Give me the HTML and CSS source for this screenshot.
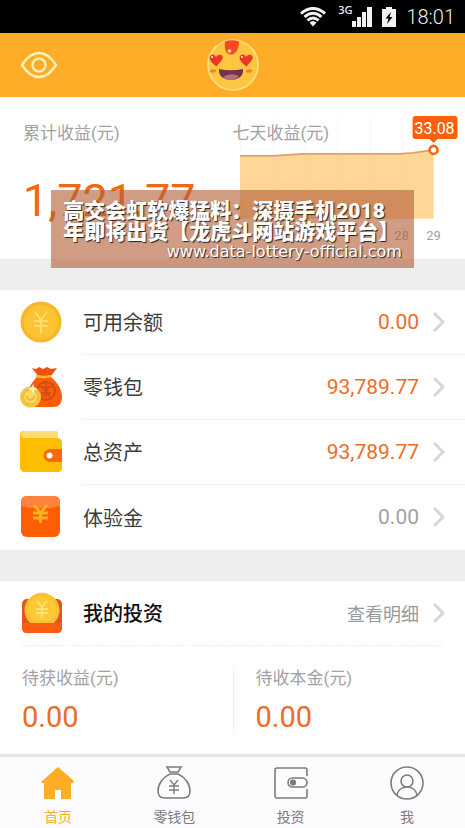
FILE: index.html
```html
<!DOCTYPE html>
<html lang="zh-CN">
<head>
    <meta charset="UTF-8">
    <meta name="viewport" content="width=device-width, initial-scale=1.0">
    <title>首页</title>
    <link rel="stylesheet" href="styles.css">
</head>
<body>
    <div class="status-bar">
        <svg class="wifi" width="26" height="20" viewBox="0 0 26 20">
            <g fill="none" stroke="#f2f2f2" stroke-width="3">
                <path d="M1 6.500Q13 -3.500 25 6.500"/>
                <path d="M4.500 10Q13 2.500 21.500 10"/>
                <path d="M7.500 13.500Q13 8.500 18.500 13.500"/>
            </g>
            <path d="M9.500 15.500Q13 12.500 16.500 15.500L13 19.500z" fill="#f2f2f2"/>
        </svg>
        <span class="network">3G</span>
        <svg class="signal" width="20" height="20" viewBox="0 0 20 20" fill="#f2f2f2">
            <path d="M0 14h4v6H0zM5 10h4v10H5zM10 5h4v15h-4zM15 0h5v20h-5z"/>
        </svg>
        <svg class="battery" width="14" height="20" viewBox="0 0 14 20">
            <path d="M4 0h6v2h4v18H0V2h4z" fill="#f2f2f2"/>
            <path d="M9 5L3.500 11.500h3L5 17l5.500-7h-3z" fill="#000"/>
        </svg>
        <span class="clock">18:01</span>
    </div>

    <header class="header">
        <button class="eye" type="button" aria-label="隐藏金额">
            <svg width="38" height="28" viewBox="0 0 38 28" fill="none" stroke="#fff0b8" stroke-width="2.400">
                <path d="M2 14C7 6 12 2 19 2s12 4 17 12c-5 8-10 12-17 12S7 22 2 14z"/>
                <circle cx="19" cy="14" r="6.500"/>
            </svg>
        </button>
        <svg class="avatar" width="52" height="52" viewBox="0 0 52 52">
            <circle cx="26" cy="26" r="25" fill="#fdc63f" stroke="#ffdf86" stroke-width="1.600"/>
            <path d="M18 2.500q7-2.500 14 0c0 7-3 13-8 13s-7-5-6-13z" fill="#f94a20"/>
            <circle cx="22.500" cy="12" r="1.800" fill="#ffe5d2"/>
            <g fill="#ee3527">
                <path d="M9.500 27.500C4 23 1.500 20 3 17c1.500-2.500 5-2 6 1 2-3 5.500-3 6.500-.500 1 3-2 5-6 10z"/>
                <path d="M39.500 27.500c-5.500-4.500-8-7.500-6.500-10.500 1.500-2.500 5-2 6 1 2-3 5.500-3 6.500-.500 1 3-2 5-6 10z"/>
            </g>
            <circle cx="5" cy="18" r="1" fill="#fff"/>
            <circle cx="35" cy="18" r="1" fill="#fff"/>
            <path d="M3 33l2-2v2l2-2v2l2-2M39 33l2-2v2l2-2v2l2-2" fill="none" stroke="#f27a32" stroke-width="1.300"/>
            <path d="M12 30q12 2.500 24 0c1 7-5 11-12 11s-13-4-12-11z" fill="#743448"/>
            <path d="M16 38q8-5 16-1-3 4-8 4t-8-3z" fill="#b17080"/>
        </svg>
    </header>

    <main>
        <section class="summary">
            <div class="total">
                <h2 class="label">累计收益(元)</h2>
                <p class="total-value">1,721.77</p>
            </div>
            <div class="week">
                <h2 class="label">七天收益(元)</h2>
                <svg class="chart" viewBox="0 0 233 162">
                    <path d="M7.500 20v35M40.500 20v35M72.500 20v35M104.500 20v35M137.500 20v35M169.500 20v35M201.500 20v35" stroke="#f6f6f6"/>
                    <path d="M7 59h33l30-2h96l14-1 21-3v69H7z" fill="#ffd695"/>
                    <path d="M40.500 59v63M72.500 57v65M104.500 57v65M137.500 57v65M169.500 57v65" stroke="#fdd392"/>
                    <path d="M7 59h33l30-2h96l14-1 21-3" fill="none" stroke="#e2a06a" stroke-width="1.600"/>
                    <path d="M183 19h39q3 0 3 3v17q0 3-3 3h-17l-4 4-4-4h-14q-3 0-3-3V22q0-3 3-3z" fill="#fc600c"/>
                    <circle cx="201" cy="53" r="4" fill="#fff" stroke="#f56610" stroke-width="2.600"/>
                    <text class="tip" x="202" y="37">33.08</text>
                    <text class="day" x="169" y="143">28</text>
                    <text class="day" x="201" y="143">29</text>
                </svg>
            </div>
            <div class="banner">
                <p class="banner-title">高交会虹软爆猛料：深摄手机2018<br>年即将出货【龙虎斗网站游戏平台】</p>
                <p class="banner-url">www.data-lottery-official.com</p>
            </div>
        </section>

        <nav class="accounts">
            <a class="row" href="#balance">
                <svg class="row-icon" width="42" height="42" viewBox="0 0 42 42">
                    <circle cx="21" cy="21" r="20.500" fill="#f8b62b"/>
                    <circle cx="21" cy="21" r="17" fill="#fcc433"/>
                    <path d="M15 11l6 8 6-8M21 19v13M14 20h14M14 25h14" fill="none" stroke="#ffde6c" stroke-width="2"/>
                </svg>
                <span class="row-body">
                    <span class="name">可用余额</span>
                    <span class="amount">0.00</span>
                    <svg class="arrow" width="12" height="20" viewBox="0 0 12 20"><path d="M1 1l9 9-9 9"/></svg>
                </span>
            </a>
            <a class="row" href="#wallet">
                <svg class="row-icon" width="42" height="42" viewBox="0 0 42 42">
                    <path d="M18 10h12c7 6 12 13 12 21 0 7-4 10-9 10H16C9 41 7 37 7 31c0-8 5-15 11-21z" fill="#fb5d08"/>
                    <path d="M12 2l4 1 3-2 4 2 4-2 4 2 6-1-6 8H18z" fill="#ed5012"/>
                    <path d="M16 10q8 2 15 0" fill="none" stroke="#ffbc27" stroke-width="2.500"/>
                    <circle cx="26" cy="25" r="9" fill="none" stroke="#d04a18" stroke-width="2"/>
                    <path d="M20 21h12M26 17v15M21 27h10M22 31l8-11M30 31l-8-11" fill="none" stroke="#d04a18" stroke-width="1.300"/>
                    <circle cx="10.500" cy="31" r="10.500" fill="#f6c444"/>
                    <circle cx="10.500" cy="31" r="7" fill="#ffd95e" stroke="#e9b83c"/>
                    <path d="M6 30q4 8 9 0" fill="none" stroke="#e8b438" stroke-width="1.500"/>
                    <path d="M13 18l1.500 3.500L18 23l-3.500 1.500L13 28l-1.500-3.500L8 23l3.500-1.500z" fill="#fff3b0"/>
                </svg>
                <span class="row-body">
                    <span class="name">零钱包</span>
                    <span class="amount">93,789.77</span>
                    <svg class="arrow" width="12" height="20" viewBox="0 0 12 20"><path d="M1 1l9 9-9 9"/></svg>
                </span>
            </a>
            <a class="row" href="#assets">
                <svg class="row-icon" width="42" height="42" viewBox="0 0 42 42">
                    <path d="M4 0h31q3 0 3 3v4q4 1 4 5v25q0 4-4 4H5q-5 0-5-5V4q0-4 4-4z" fill="#fdbd00"/>
                    <path d="M4 0h31q3 0 3 3v4H6Q1 7 1 3q1-3 3-3z" fill="#ffdc76"/>
                    <path d="M42 18H30a6.500 6.500 0 000 13h12z" fill="#fa6813"/>
                    <circle cx="29.500" cy="24.500" r="3" fill="#fff"/>
                </svg>
                <span class="row-body">
                    <span class="name">总资产</span>
                    <span class="amount">93,789.77</span>
                    <svg class="arrow" width="12" height="20" viewBox="0 0 12 20"><path d="M1 1l9 9-9 9"/></svg>
                </span>
            </a>
            <a class="row" href="#bonus">
                <svg class="row-icon" width="42" height="42" viewBox="0 0 42 42">
                    <rect x="1" y="0" width="39" height="41" rx="6" fill="#ff5d02"/>
                    <path d="M7 0h27q6 0 6 6v4Q20 15 1 10V6q0-6 6-6z" fill="#ff833c"/>
                    <path d="M14 9l6.500 8L27 9M20.500 17v10M13 17h15M13 22h15" fill="none" stroke="#ffb01e" stroke-width="2.800"/>
                </svg>
                <span class="row-body">
                    <span class="name">体验金</span>
                    <span class="amount empty">0.00</span>
                    <svg class="arrow" width="12" height="20" viewBox="0 0 12 20"><path d="M1 1l9 9-9 9"/></svg>
                </span>
            </a>
        </nav>

        <section class="invest">
            <a class="row" href="#invest">
                <svg class="row-icon" width="42" height="42" viewBox="0 0 42 42">
                    <rect x="2" y="7" width="40" height="34" rx="5" fill="#e35420"/>
                    <path d="M2 31h40v5q0 5-5 5H7q-5 0-5-5z" fill="#fc5b12"/>
                    <path d="M10 31a17.500 17.500 0 1124 0z" fill="#fdc02f"/>
                    <path d="M12.500 29a14 14 0 1119 0z" fill="#ffc936"/>
                    <path d="M17 9l5 6 5-6M22 15v10M16 17h12M16 21h12" fill="none" stroke="#ffe277" stroke-width="1.800"/>
                </svg>
                <span class="row-body">
                    <span class="name strong">我的投资</span>
                    <span class="more">查看明细</span>
                    <svg class="arrow" width="12" height="20" viewBox="0 0 12 20"><path d="M1 1l9 9-9 9"/></svg>
                </span>
            </a>
            <div class="pending">
                <div class="pending-item">
                    <h3 class="label">待获收益(元)</h3>
                    <p class="pending-value">0.00</p>
                </div>
                <div class="pending-item">
                    <h3 class="label">待收本金(元)</h3>
                    <p class="pending-value">0.00</p>
                </div>
            </div>
        </section>
    </main>

    <nav class="tabs">
        <a class="tab active" href="#home">
            <svg width="34" height="34" viewBox="0 0 34 34" fill="#ffac26">
                <path d="M17 1l16 14-1 2h-2v16H20v-9h-6v9H3V17H1l-1-1z"/>
            </svg>
            首页
        </a>
        <a class="tab" href="#wallet">
            <svg width="34" height="34" viewBox="0 0 34 34" fill="none" stroke="#7c7c7c" stroke-width="1.600">
                <path d="M10 1h14l-3 5h-8zM13 8C6 11 1 18 1 25c0 5 3 7 7 7h18c4 0 7-2 7-7 0-7-5-14-12-17z"/>
                <path d="M13 14l4 5 4-5M17 19v9M12 20h10M12 24h10" stroke-width="1.400"/>
            </svg>
            零钱包
        </a>
        <a class="tab" href="#invest">
            <svg width="34" height="34" viewBox="0 0 34 34" fill="none" stroke="#7c7c7c" stroke-width="1.600">
                <path d="M33 10V4q0-2-2-2H3Q1 2 1 4v26q0 2 2 2h28q2 0 2-2v-7"/>
                <rect x="14" y="12" width="19" height="9" rx="4.500"/>
                <circle cx="19" cy="16.500" r="2.300" fill="#7c7c7c"/>
            </svg>
            投资
        </a>
        <a class="tab" href="#me">
            <svg width="34" height="34" viewBox="0 0 34 34" fill="none" stroke="#7c7c7c" stroke-width="1.600">
                <circle cx="17" cy="17" r="16"/>
                <circle cx="17" cy="15" r="6"/>
                <path d="M7 29c1-5 5-8 10-8s9 3 10 8"/>
            </svg>
            我
        </a>
    </nav>
</body>
</html>
```

FILE: styles.css
```css
* {
    box-sizing: border-box;
}
body {
    font-family: Roboto, "Noto Sans CJK SC", sans-serif;
    background: #eee;
    color: #3c3c3c;
    margin: 0;
}
h2, h3, p {
    margin: 0;
}
a {
    color: inherit;
    text-decoration: none;
}
svg {
    display: block;
    flex: none;
}

/* Status bar */
.status-bar {
    display: flex;
    justify-content: flex-end;
    align-items: center;
    height: 33px;
    padding-right: 10px;
    background: #000;
    color: #eee;
}
.network {
    align-self: flex-start;
    margin: 4px 0 0 12px;
    font-family: "Noto Sans", sans-serif;
    font-size: 11px;
    font-weight: 500;
    line-height: 12px;
}
.battery {
    margin: 0 10px;
}
.clock {
    font-size: 20px;
    font-weight: 300;
}

/* Header */
.header {
    display: grid;
    grid-template-columns: 1fr auto 1fr;
    align-items: center;
    height: 64px;
    padding: 0 20px;
    background: #ffad29;
}
.eye {
    justify-self: start;
    padding: 0;
    border: none;
    background: none;
    cursor: pointer;
}

/* Income summary */
.summary {
    position: relative;
    display: grid;
    grid-template-columns: 1fr 1fr;
    background: #fff;
}
.label {
    color: #a2a2a2;
    font-size: 17px;
    font-weight: normal;
    line-height: 24px;
}
.total {
    padding: 24px 0 0 23px;
}
.total-value {
    margin-top: 30px;
    color: #f56610;
    font-size: 45px;
    line-height: 52px;
}
.week {
    display: grid;
}
.week .label {
    grid-area: 1 / 1;
    z-index: 1;
    padding-top: 24px;
}
.chart {
    grid-area: 1 / 1;
    width: 100%;
}
.tip {
    fill: #fff;
    font-size: 16px;
    text-anchor: middle;
}
.day {
    fill: #a2a2a2;
    font-size: 13px;
    text-anchor: middle;
}
.banner {
    position: absolute;
    top: 93px;
    left: 11%;
    right: 11%;
    z-index: 2;
    padding: 11px 12px 8px;
    background: rgba(179, 95, 56, 0.62);
    color: #fff;
    text-shadow: 1px 1px 1px #222;
    white-space: nowrap;
}
.banner-title {
    font-size: 21px;
    font-weight: 900;
    line-height: 21px;
}
.banner-url {
    font-family: "DejaVu Sans", sans-serif;
    font-size: 16px;
    line-height: 17px;
    text-align: right;
}

/* Account rows */
.accounts {
    margin: 31px 0;
    background: #fff;
}
.row {
    display: flex;
    align-items: center;
    gap: 21px;
    padding-left: 20px;
}
.row-body {
    display: flex;
    flex: 1;
    align-items: center;
    height: 65px;
    padding-right: 20px;
    border-bottom: 1px solid #f0f0f0;
}
.row:last-child .row-body {
    border-bottom: none;
}
.name {
    flex: 1;
    font-size: 20px;
}
.strong {
    color: #111;
    font-weight: 500;
}
.amount {
    color: #ec6c26;
    font-size: 21px;
}
.empty {
    color: #a2a2a2;
}
.more {
    color: #999;
    font-size: 18px;
}
.arrow {
    margin-left: 14px;
    fill: none;
    stroke: #d6d6d6;
    stroke-width: 3;
}

/* Investments */
.invest {
    background: #fff;
}
.invest .row-body {
    height: 64px;
    border-bottom: none;
}
.pending {
    display: grid;
    grid-template-columns: 1fr 1fr;
    margin: 0 22px;
    padding: 20px 0;
    border-top: 1px dashed #eee;
}
.pending-item + .pending-item {
    padding-left: 22px;
    border-left: 1px solid #eee;
}
.pending-value {
    margin-top: 10px;
    color: #ec6c26;
    font-size: 29px;
    line-height: 34px;
}

/* Bottom tabs */
.tabs {
    display: grid;
    grid-template-columns: repeat(4, 1fr);
    border-top: 3px solid #e6e6e6;
    background: #fcfbfe;
}
.tab {
    display: flex;
    flex-direction: column;
    align-items: center;
    gap: 7px;
    padding: 9px 0 4px;
    color: #7c7c7c;
    font-size: 14px;
    line-height: 20px;
}
.active {
    color: #ffac26;
}
```
